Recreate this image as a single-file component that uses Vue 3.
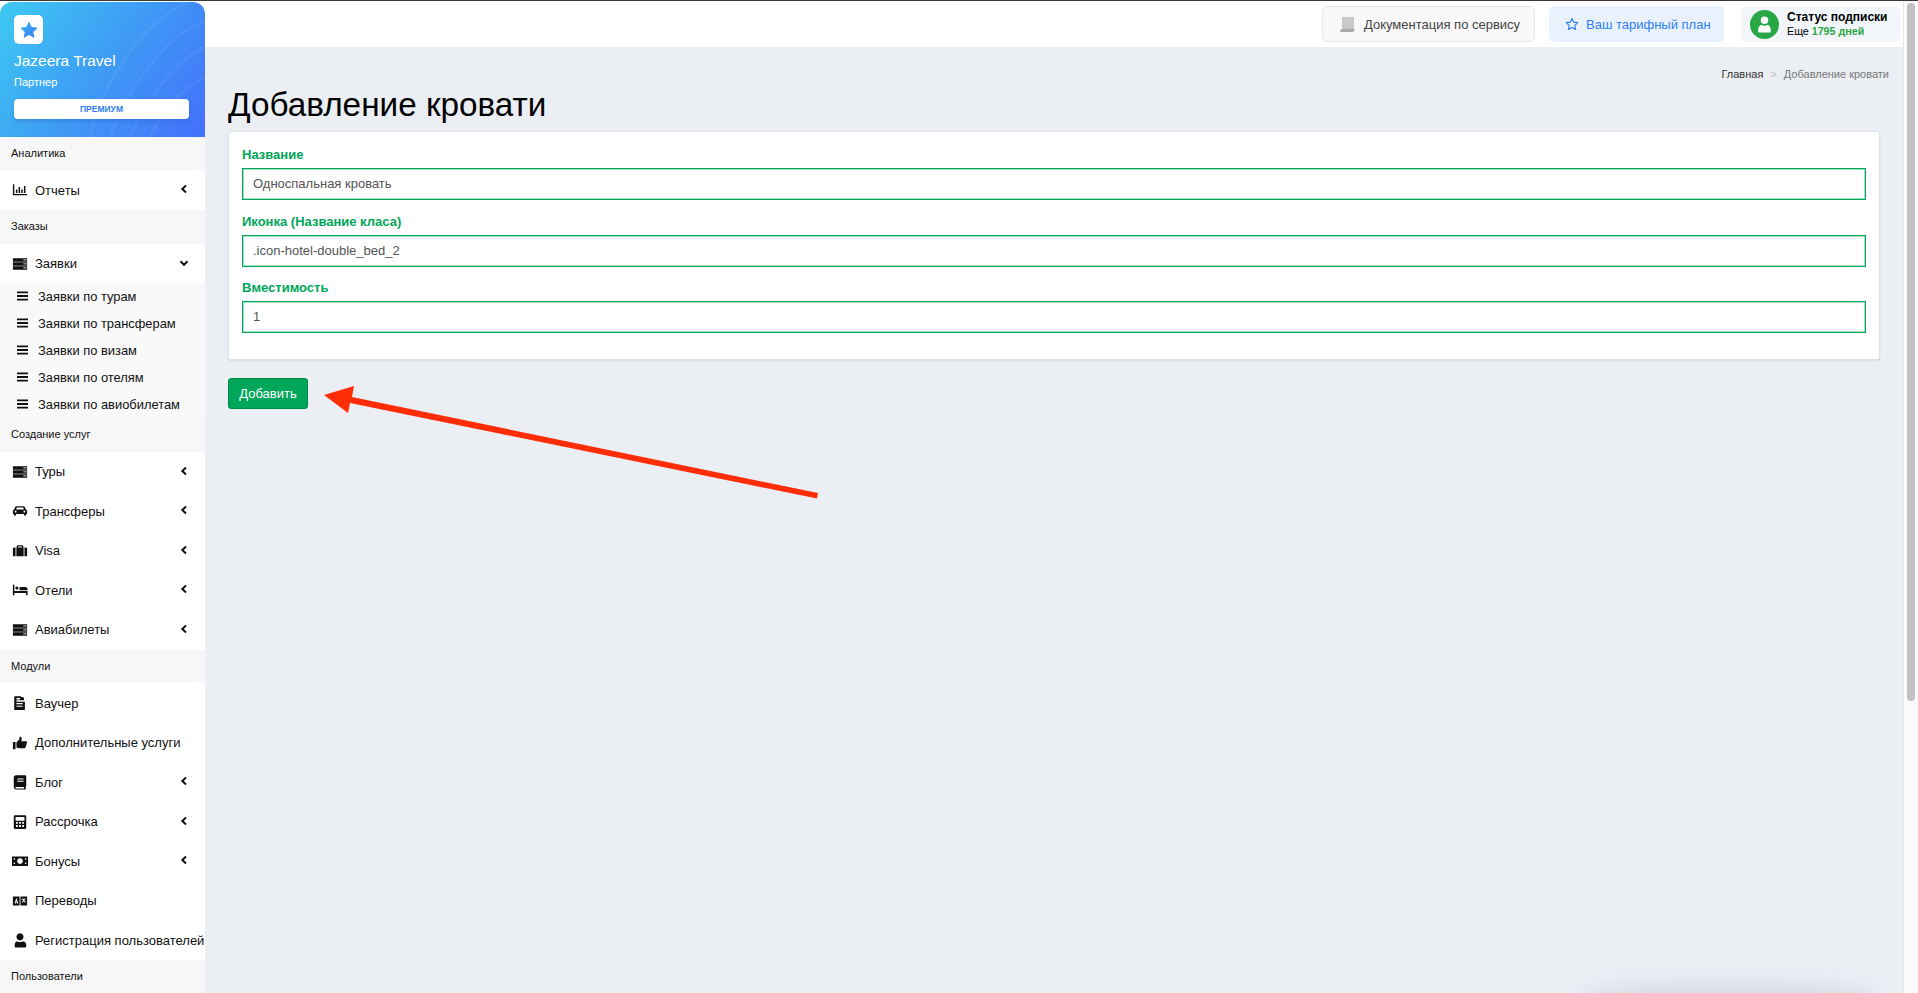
<script setup>
const icons = {
  chart: 'M1 2.500h1.600v10.900H17V15H1z M4.400 8.500h1.700v3.900H4.400z M7.400 5.500h1.700v6.900H7.400z M10.400 8.500h1.700v3.900h-1.700z M13.400 4.500h1.700v7.900h-1.700z',
  server: 'M1 2.500h16v4H1z M13 3.700h1.200v1.500H13z M15 3.700h1.200v1.500H15z M1 7h16v4H1z M13 8.200h1.200v1.500H13z M15 8.200h1.200v1.500H15z M1 11.500h16v4H1z M13 12.700h1.200v1.500H13z M15 12.700h1.200v1.500H15z',
  car: 'M5 3.600h8c.8 0 1.300.5 1.600 1.100l1 2.500c.9.3 1.400 1 1.400 1.900v3.400h-1.200v1.600h-2.400v-1.600H4.600v1.600H2.200v-1.600H1V9.100c0-.9.5-1.600 1.400-1.900l1-2.500C3.700 4.100 4.200 3.600 5 3.600z M5.400 5.200l-.8 2h8.800l-.8-2z M3 8.800v1.800h2V8.800z M13 8.800v1.800h2V8.800z',
  suitcase: 'M6.500 2.500h5c.7 0 1.200.5 1.200 1.200V5H16c.6 0 1 .4 1 1v8c0 .6-.4 1-1 1h-2V5h-.9v10H4.900V5H4v10H2c-.6 0-1-.4-1-1V6c0-.6.4-1 1-1h3.300V3.700c0-.7.5-1.200 1.200-1.200z M6.700 3.900V5h4.600V3.900z',
  bed: 'M1 3h1.700v7H17.500v5h-1.700v-2.500H2.700V15H1z M5.500 5a1.800 1.800 0 1 1-.01 0z M8.500 5.500h6.500c1.500 0 2.500 1 2.500 2.500v1.200h-9z',
  voucher: 'M3 1.500h7l1 1h1.500c.6 0 1 .4 1 1V6H5v1.500h9.500V16c0 .6-.4 1-1 1h-10c-.6 0-1-.4-1-1V2.500c0-.6.4-1 1-1z M5 3.500V5h4V3.500z M5 9v1.300h7V9z M5 12v1.300h7V12z',
  thumb: 'M1 8h3v8H1z M5 8.500l3-3.500c.7-.9.7-2 .7-3.200 1.500-.2 2.300 1 2.300 2.500 0 1-.3 1.800-.7 2.700h5.200c1 0 1.500.7 1.500 1.500s-.3 1.200-.8 1.400c.4.700.2 1.500-.4 1.900.2.800-.1 1.400-.7 1.700.1 1-.5 1.500-1.500 1.500H9c-1.600 0-2.700-.5-4-1z',
  book: 'M4.500 1.500H15c.6 0 1 .4 1 1v11c0 .5-.3.8-.7.9v1.600c.4.100.7.300.7.600 0 .500-.4.900-1 .900H4.500C3.100 17.500 2 16.400 2 15V4c0-1.400 1.100-2.500 2.500-2.500z M6 5v1.300h7V5z M6 7.500v1.300h7V7.500z M4.500 14.500c-.9 0-.9 1.700 0 1.700h9v-1.700z',
  calc: 'M3.500 1.500h11c.8 0 1.500.7 1.500 1.500v12.500c0 .8-.7 1.500-1.500 1.500h-11c-.8 0-1.500-.7-1.500-1.500V3c0-.8.7-1.500 1.500-1.500z M4 3.500v4h10v-4z M4.500 9v2h2V9z M8 9v2h2V9z M11.500 9v2h2V9z M4.500 12.500v2h2v-2z M8 12.500v2h2v-2z M11.500 12.500v2h2v-2z',
  money: 'M0 4h18v10.500H0z M9 6a3.200 3.200 0 1 0 .01 0z M2 6v2c1 0 1.500-.8 1.500-2z M14.500 6c0 1.200.5 2 1.500 2V6z M2 10.500v2h1.500c0-1.200-.5-2-1.500-2z M16 10.500c-1 0-1.500.8-1.500 2H16z',
  lang: 'M1 4h7.500v10H1z M9.500 4H17v10H9.500z M4.800 5.800l-2 6h1.300l.3-1.100h1.100l.3 1.100h1.300l-2-6z M4.600 9.800l.3-1.300.3 1.300z M11 6.500v1h1.800c-.2 1-.9 2-1.800 2.700l.7.8c.6-.4 1.200-1 1.500-1.600.4.600 1 1.200 1.600 1.600l.7-.8c-.8-.6-1.400-1.400-1.700-2.400V7.500h1.300v-1z',
  user: 'M9 1.500a4 4 0 1 1-.01 0z M5.500 10.300c1 .6 2.200 1 3.500 1s2.500-.4 3.500-1c2 .3 3.500 2 3.500 4V16c0 .8-.7 1.500-1.500 1.500h-11C3.700 17.500 3 16.800 3 16v-1.700c0-2 1.500-3.700 2.500-4z'
}
const sections = [
  { title: 'Аналитика', items: [{ label: 'Отчеты', icon: 'chart', arrow: true }] },
  {
    title: 'Заказы',
    items: [{ label: 'Заявки', icon: 'server', open: true, sub: ['Заявки по турам', 'Заявки по трансферам', 'Заявки по визам', 'Заявки по отелям', 'Заявки по авиобилетам'] }]
  },
  {
    title: 'Создание услуг',
    items: [
      { label: 'Туры', icon: 'server', arrow: true },
      { label: 'Трансферы', icon: 'car', arrow: true },
      { label: 'Visa', icon: 'suitcase', arrow: true },
      { label: 'Отели', icon: 'bed', arrow: true },
      { label: 'Авиабилеты', icon: 'server', arrow: true }
    ]
  },
  {
    title: 'Модули',
    items: [
      { label: 'Ваучер', icon: 'voucher' },
      { label: 'Дополнительные услуги', icon: 'thumb' },
      { label: 'Блог', icon: 'book', arrow: true },
      { label: 'Рассрочка', icon: 'calc', arrow: true },
      { label: 'Бонусы', icon: 'money', arrow: true },
      { label: 'Переводы', icon: 'lang' },
      { label: 'Регистрация пользователей', icon: 'user' }
    ]
  },
  { title: 'Пользователи', items: [] }
]
const fields = [
  { label: 'Название', value: 'Односпальная кровать' },
  { label: 'Иконка (Название класа)', value: '.icon-hotel-double_bed_2' },
  { label: 'Вместимость', value: '1' }
]
</script>

<template>
  <div class="page">
    <aside class="sidebar">
      <div class="brand">
        <svg class="waves" viewBox="0 0 205 135" preserveAspectRatio="none">
          <path d="M110 135C130 80 170 30 205 20M130 135C150 90 180 55 205 45M90 135C105 70 150 15 190 0M150 135C165 105 185 85 205 75" fill="none" stroke="#fff" stroke-opacity=".05" stroke-width="3" />
        </svg>
        <div class="logo">
          <svg viewBox="0 0 24 24" width="18" height="18">
            <defs>
              <linearGradient id="lg" x1="0" y1="0" x2="1" y2="1">
                <stop offset="0" stop-color="#35b5f0" />
                <stop offset="1" stop-color="#3d78fa" />
              </linearGradient>
            </defs>
            <path fill="url(#lg)" stroke="url(#lg)" stroke-width="1.500" stroke-linejoin="round" d="M12 2l3 6.700 7.200.8-5.400 4.800 1.500 7.200L12 17.800l-6.300 3.700 1.500-7.200L1.800 9.500 9 8.700z" />
          </svg>
        </div>
        <div class="brand-name">Jazeera Travel</div>
        <div class="brand-role">Партнер</div>
        <div class="premium">ПРЕМИУМ</div>
      </div>
      <template v-for="s in sections" :key="s.title">
        <div class="sec-title">{{ s.title }}</div>
        <template v-for="i in s.items" :key="i.label">
          <div class="item">
            <svg class="ico" viewBox="0 0 18 18"><path :d="icons[i.icon]" fill-rule="evenodd" /></svg>
            <span class="item-label">{{ i.label }}</span>
            <svg v-if="i.arrow" class="chev" viewBox="0 0 10 10"><path d="M7 1.500L3.300 5 7 8.500" /></svg>
            <svg v-if="i.open" class="chev" viewBox="0 0 10 10"><path d="M1.500 3.200L5 6.800l3.500-3.600" /></svg>
          </div>
          <div v-if="i.sub" class="sub">
            <div v-for="t in i.sub" :key="t" class="sub-item">
              <svg class="sub-ico" viewBox="0 0 12 10"><path d="M0 0h12v2H0zM0 4h12v2H0zM0 8h12v2H0z" /></svg>
              <span>{{ t }}</span>
            </div>
          </div>
        </template>
      </template>
    </aside>

    <div class="content">
      <header class="topbar">
        <div class="tb-btn doc">
          <svg class="tb-ico" width="16" height="15" viewBox="0 0 16 15"><path d="M2 0h12v12H2z" fill="#c9c9c9" /><path d="M1 12h14l-2 3H0z" fill="#a8a8a8" /></svg>
          <span>Документация по сервису</span>
        </div>
        <div class="tb-btn plan">
          <svg class="tb-ico" width="14" height="14" viewBox="0 0 24 24"><path fill="none" stroke="#2f80f5" stroke-width="2" stroke-linejoin="round" d="M12 2.500l3 6.300 6.800.9-5 4.700 1.300 6.800-6.100-3.300-6.100 3.300 1.300-6.800-5-4.700 6.800-.9z" /></svg>
          <span>Ваш тарифный план</span>
        </div>
        <div class="tb-btn status">
          <div class="avatar">
            <svg width="15" height="17" viewBox="0 0 14 16"><circle cx="7" cy="4" r="3.500" fill="#fff" /><path d="M1 14c0-4 2-5.500 3-5.500 1.800 1 4.200 1 6 0 1 0 3 1.500 3 5.500 0 1-.5 1.500-1.500 1.500h-9C1.500 15.500 1 15 1 14z" fill="#fff" /></svg>
          </div>
          <div class="status-text">
            <b>Статус подписки</b>
            <div class="days">Еще <b>1795 дней</b></div>
          </div>
        </div>
      </header>

      <main class="main">
        <nav class="crumbs"><span class="c1">Главная</span><span class="c2">&gt;</span><span class="c3">Добавление кровати</span></nav>
        <h1>Добавление кровати</h1>
        <section class="card">
          <div v-for="f in fields" :key="f.label" class="field">
            <label>{{ f.label }}</label>
            <div class="input">{{ f.value }}</div>
          </div>
        </section>
        <div class="submit">Добавить</div>
      </main>
    </div>

    <div class="scrollbar"><div class="thumb"></div></div>
    <div class="bottom-shadow"></div>

    <svg class="arrow" width="1918" height="993" viewBox="0 0 1918 993">
      <path d="M818 493L352 397 354 386 324 395 348 413 350 403 817 498.500z" fill="#ff2d06" />
    </svg>
  </div>
</template>

<style>
html, body { margin: 0; padding: 0; background: #ebeef3; overflow: hidden; }
</style>

<style scoped>
.page {
  position: relative;
  display: flex;
  width: 1918px;
  height: 993px;
  overflow: hidden;
  font-family: "Liberation Sans", Arial, sans-serif;
  color: #000;
  background: #ebeef3;
  border-top: 1px solid #3a3a3a;
  box-sizing: border-box;
}
.sidebar {
  width: 205px;
  flex: none;
  background: #fff;
  display: flex;
  flex-direction: column;
  overflow: hidden;
  padding-top: 1px;
}
.brand {
  position: relative;
  height: 135px;
  flex: none;
  box-sizing: border-box;
  padding: 13px 14px 0;
  border-radius: 12px 12px 0 0;
  background: linear-gradient(125deg, #3ec9f2 0%, #3e9bf5 50%, #4470fb 100%);
  color: #fff;
  overflow: hidden;
}
.waves { position: absolute; inset: 0; width: 100%; height: 100%; }
.logo {
  position: relative;
  width: 29px;
  height: 29px;
  border-radius: 5px;
  background: #fff;
  display: flex;
  align-items: center;
  justify-content: center;
}
.brand-name { position: relative; font-size: 15.500px; line-height: 18px; margin-top: 8px; }
.brand-role { position: relative; font-size: 11px; line-height: 13px; margin-top: 6px; }
.premium {
  position: relative;
  margin-top: 10px;
  width: 175px;
  height: 20px;
  line-height: 20px;
  border-radius: 4px;
  background: #fff;
  color: #2f80f5;
  font-size: 8.500px;
  font-weight: 700;
  text-align: center;
  box-shadow: 0 2px 4px rgba(30, 60, 160, .25);
}
.sec-title {
  height: 33.650px;
  line-height: 33px;
  flex: none;
  background: #f7f7f7;
  padding-left: 11px;
  font-size: 11px;
  color: #111;
}
.item {
  height: 39.550px;
  flex: none;
  display: flex;
  align-items: center;
  position: relative;
  padding-left: 12px;
  font-size: 13px;
  color: #111;
}
.ico { width: 16px; height: 16px; fill: #111; flex: none; }
.item-label { margin-left: 7px; white-space: nowrap; }
.chev {
  position: absolute;
  left: 179px;
  top: 50%;
  margin-top: -6px;
  width: 10px;
  height: 10px;
  fill: none;
  stroke: #111;
  stroke-width: 2;
}
.sub { background: #f9f9f9; flex: none; }
.sub-item {
  height: 27px;
  display: flex;
  align-items: center;
  padding-left: 17px;
  padding-bottom: 1px;
  box-sizing: border-box;
  font-size: 12.900px;
  color: #111;
  white-space: nowrap;
}
.sub-ico { width: 11px; height: 10px; fill: #111; margin-right: 10px; flex: none; }
.content { flex: 1; min-width: 0; margin-right: 15px; display: flex; flex-direction: column; }
.topbar {
  height: 46px;
  flex: none;
  background: #fff;
  display: flex;
  justify-content: flex-end;
  align-items: flex-start;
  padding: 5px 3px 0 0;
  box-sizing: border-box;
}
.tb-btn {
  height: 36px;
  box-sizing: border-box;
  border-radius: 5px;
  display: flex;
  align-items: center;
  font-size: 13px;
  white-space: nowrap;
  flex: none;
}
.tb-ico { flex: none; }
.doc { width: 213px; gap: 8px; padding-left: 17px; background: #f8f8f8; border: 1px solid #e6e6e6; color: #444; margin-right: 14px; }
.plan { width: 175px; gap: 7px; padding-left: 16px; background: #e9f1fd; color: #2f80f5; margin-right: 17px; }
.status { width: 159px; padding-left: 9px; background: #f2f5fa; gap: 8px; }
.avatar {
  width: 29px;
  height: 29px;
  border-radius: 50%;
  background: #28a745;
  display: flex;
  align-items: center;
  justify-content: center;
  flex: none;
}
.status-text { font-size: 12px; line-height: 15px; color: #000; }
.days { font-size: 10.700px; line-height: 13px; }
.days b { color: #28a745; }
.main { flex: 1; padding: 0 23px; display: flex; flex-direction: column; align-items: stretch; }
.crumbs {
  display: flex;
  justify-content: flex-end;
  align-items: center;
  height: 14px;
  margin-top: 20px;
  margin-right: -9px;
  font-size: 11px;
}
.c1 { color: #333; }
.c2 { color: #bbb; margin: 0 7px; }
.c3 { color: #777; }
h1 {
  font-size: 33.300px;
  line-height: 38px;
  font-weight: 400;
  margin: 5px 0 7px;
  color: #000;
}
.card {
  background: #fff;
  border: 1px solid #dfe2e7;
  border-radius: 3px;
  box-shadow: 0 1px 2px rgba(0, 0, 0, .08);
  padding: 15px 13px 0;
  height: 229px;
  box-sizing: border-box;
}
.field label {
  display: block;
  font-size: 13px;
  line-height: 15px;
  font-weight: 700;
  color: #00a65a;
  margin-bottom: 6px;
}
.field + .field { margin-top: 13.500px; }
.input {
  height: 32px;
  box-sizing: border-box;
  border: 1px solid #00a65a;
  box-shadow: inset 0 0 0 1px rgba(0, 166, 90, .35);
  padding-left: 10px;
  line-height: 30px;
  font-size: 13px;
  color: #555;
}
.submit {
  margin-top: 18px;
  width: 80px;
  height: 31px;
  box-sizing: border-box;
  line-height: 29px;
  text-align: center;
  background: #00a65a;
  border: 1px solid #008d4c;
  border-radius: 3px;
  color: #fff;
  font-size: 13px;
}
.scrollbar {
  position: absolute;
  top: -1px;
  right: 0;
  width: 15px;
  height: 993px;
  background: #fafafa;
  border-left: 1px solid #e8e8e8;
  box-sizing: border-box;
}
.thumb { margin: 3px 3px 0 3px; height: 698px; border-radius: 4px; background: #c1c1c1; }
.bottom-shadow {
  position: absolute;
  left: 1580px;
  bottom: -26px;
  width: 300px;
  height: 30px;
  border-radius: 50%;
  background: rgba(60, 70, 80, .16);
  filter: blur(12px);
}
.arrow { position: absolute; left: 0; top: -1px; pointer-events: none; }
</style>
